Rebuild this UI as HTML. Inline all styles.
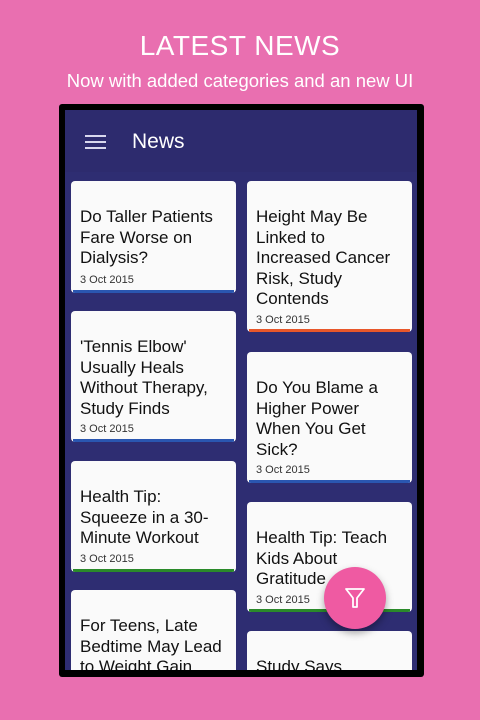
<!DOCTYPE html>
<html><head><style>
*{margin:0;padding:0;box-sizing:border-box}
body{width:480px;height:720px;background:#e96fb0;font-family:"Liberation Sans","DejaVu Sans",sans-serif;position:relative;overflow:hidden}
.h1{position:absolute;top:30px;width:100%;text-align:center;color:#fff;font-size:28px;letter-spacing:0.5px}
.h2{position:absolute;top:70px;width:100%;text-align:center;color:#fff;font-size:18.5px}
.frame{position:absolute;left:59px;top:104px;width:365px;height:573px;background:#000;border-radius:3px}
.screen{position:absolute;left:65px;top:110px;width:352px;height:560px;background:#2e2d72;overflow:hidden}
.bar{position:absolute;left:0;top:0;width:352px;height:62px;background:#2d2b6e}
.ham{position:absolute;left:20px;top:25px;width:21px}
.ham i{display:block;height:2px;background:#d8d8ee;margin-bottom:4px}
.title{position:absolute;left:67px;top:20px;color:#fff;font-size:21px}
.card{position:absolute;width:165px;background:#fafafa;border-radius:4px;overflow:hidden}
.card .t{position:absolute;left:9px;font-size:17px;line-height:20.5px;color:#111;white-space:nowrap}
.card .d{position:absolute;left:9px;font-size:11px;color:#333}
.card .b{position:absolute;left:2px;right:2px;bottom:0;height:3px}
.fab{position:absolute;left:324px;top:567px;width:62px;height:62px;border-radius:50%;background:#ef5aa2;box-shadow:0 4px 8px rgba(0,0,0,.35)}
</style></head><body>
<div class="h1">LATEST NEWS</div>
<div class="h2">Now with added categories and an new UI</div>
<div class="frame"></div>
<div class="screen">
<div class="bar"><div class="ham"><i></i><i></i><i></i></div><div class="title">News</div></div>
<div class="card" style="left:6px;top:71px;height:112px"><div class="t" style="top:26px">Do Taller Patients<br>Fare Worse on<br>Dialysis?</div><div class="d" style="top:93px">3 Oct 2015</div><div class="b" style="background:#2a56b0"></div></div>
<div class="card" style="left:6px;top:201px;height:131px"><div class="t" style="top:26px">'Tennis Elbow'<br>Usually Heals<br>Without Therapy,<br>Study Finds</div><div class="d" style="top:112px">3 Oct 2015</div><div class="b" style="background:#2a56b0"></div></div>
<div class="card" style="left:6px;top:351px;height:111px"><div class="t" style="top:26px">Health Tip:<br>Squeeze in a 30-<br>Minute Workout</div><div class="d" style="top:92px">3 Oct 2015</div><div class="b" style="background:#2a8a2a"></div></div>
<div class="card" style="left:6px;top:480px;height:100px"><div class="t" style="top:26px">For Teens, Late<br>Bedtime May Lead<br>to Weight Gain</div></div>
<div class="card" style="left:182px;top:71px;height:151px"><div class="t" style="top:26px">Height May Be<br>Linked to<br>Increased Cancer<br>Risk, Study<br>Contends</div><div class="d" style="top:133px">3 Oct 2015</div><div class="b" style="background:#e8572a"></div></div>
<div class="card" style="left:182px;top:242px;height:131px"><div class="t" style="top:26px">Do You Blame a<br>Higher Power<br>When You Get<br>Sick?</div><div class="d" style="top:112px">3 Oct 2015</div><div class="b" style="background:#2a56b0"></div></div>
<div class="card" style="left:182px;top:392px;height:110px"><div class="t" style="top:26px">Health Tip: Teach<br>Kids About<br>Gratitude</div><div class="d" style="top:92px">3 Oct 2015</div><div class="b" style="background:#2a8a2a"></div></div>
<div class="card" style="left:182px;top:521px;height:60px"><div class="t" style="top:26px">Study Says</div></div>
</div>
<div class="fab"><svg width="62" height="62" viewBox="0 0 62 62"><path d="M22 22 H40 L33 31 V40 H29 V31 Z" fill="none" stroke="#fff" stroke-width="1.8" stroke-linejoin="round"/></svg></div>
</body></html>
